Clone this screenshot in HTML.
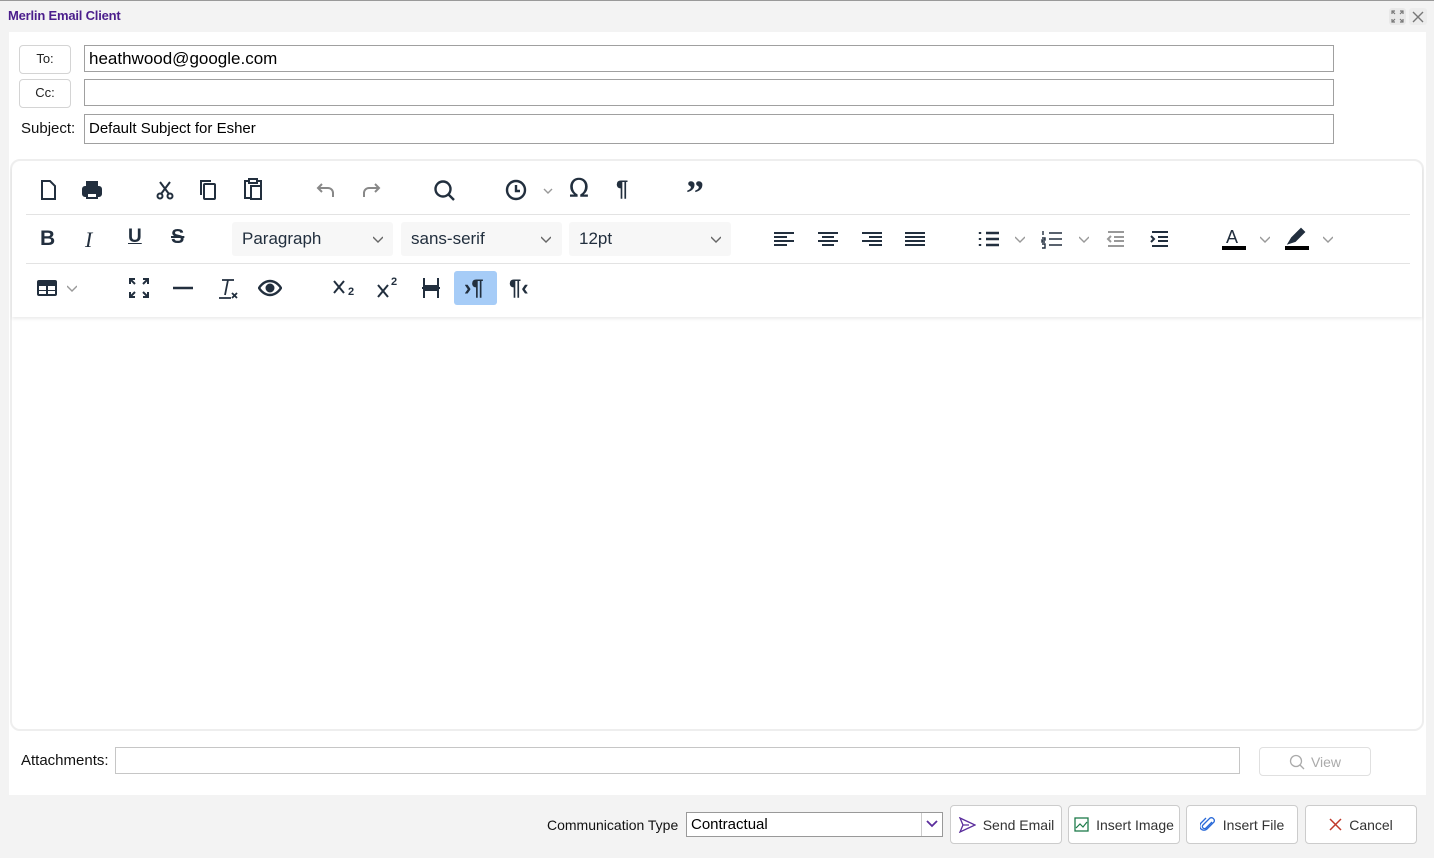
<!DOCTYPE html>
<html><head><meta charset="utf-8"><style>
*{box-sizing:border-box;margin:0;padding:0}
body{width:1434px;height:858px;background:#f3f3f3;font-family:"Liberation Sans",sans-serif;position:relative;overflow:hidden;color:#111}
.a{position:absolute}
.top{left:0;top:0;width:1434px;height:1px;background:#999}
.title{left:8px;top:8px;font-size:13px;font-weight:bold;color:#4b1e8c;letter-spacing:-0.2px}
.panel{left:9px;top:32px;width:1417px;height:763px;background:#fff}
.lbtn{border:1px solid #d4d4d4;border-radius:4px;background:#fff;font-size:13px;text-align:center;line-height:26px;color:#222}
.inp{border:1px solid #a0a0a0;background:#fff;font-size:16px;padding-left:4px;color:#000}
.editor{left:10px;top:159px;width:1414px;height:572px;border:2px solid #eee;border-radius:10px}
.tb{left:12px;top:161px;width:1410px;height:156px;box-shadow:0 2px 3px rgba(0,0,0,.08);border-radius:10px 10px 0 0}
.sep{height:1px;background:#e3e3e3;left:26px;width:1384px}
.ic{position:absolute;width:24px;height:24px}
.ic path,.ic rect,.ic circle{fill:none;stroke:#222f3e;stroke-width:2}
.sel{position:absolute;top:222px;height:34px;background:#f7f7f7;border-radius:3px;font-size:17px;color:#222f3e;padding-left:10px;line-height:34px}
.chev{position:absolute;width:10px;height:10px}
.btn{position:absolute;top:805px;height:39px;border:1px solid #ccc;border-radius:4px;background:#fff;font-size:14px;color:#333;display:flex;align-items:center;justify-content:center;gap:7px}
</style></head><body>
<div class="a top"></div>
<div class="a title">Merlin Email Client</div>
<div class="a" style="left:1389px;top:8px;width:17px;height:17px;background:#e8e8e8;border-radius:3px"></div>
<svg class="a" style="left:1391px;top:10px" width="13" height="13" viewBox="0 0 13 13"><path d="M1 4V1h3M9 1h3v3M12 9v3H9M4 12H1V9M1 1l3 3M12 1L9 4M12 12L9 9M1 12l3-3" stroke="#777" fill="none" stroke-width="1.2"/></svg>
<div class="a" style="left:1409px;top:8px;width:18px;height:17px;background:#ececec;border-radius:3px"></div>
<svg class="a" style="left:1412px;top:11px" width="12" height="12"><path d="M1 1l10 10M11 1L1 11" stroke="#777" stroke-width="1.4"/></svg>
<div class="a panel"></div>

<div class="a lbtn" style="left:19px;top:45px;width:52px;height:29px">To:</div>
<div class="a lbtn" style="left:19px;top:79px;width:52px;height:29px">Cc:</div>
<div class="a" style="left:21px;top:120px;font-size:15px">Subject:</div>
<div class="a inp" style="left:84px;top:45px;width:1250px;height:27px;line-height:25px;font-size:17px">heathwood@google.com</div>
<div class="a inp" style="left:84px;top:79px;width:1250px;height:27px"></div>
<div class="a inp" style="left:84px;top:114px;width:1250px;height:30px;line-height:28px;font-size:15px">Default Subject for Esher</div>

<div class="a editor"></div>
<div class="a tb"></div>
<div class="a sep" style="top:214px"></div>
<div class="a sep" style="top:263px"></div>

<!-- row1 -->
<svg class="ic" style="left:36px;top:178px" viewBox="0 0 24 24"><path d="M6 3h8l5 5v13H6z"/></svg>
<svg class="ic" style="left:80px;top:178px" viewBox="0 0 24 24"><rect x="7" y="4" width="10" height="4" style="fill:#222f3e"/><rect x="3" y="9" width="18" height="9" rx="2" style="fill:#222f3e"/><rect x="7" y="15" width="10" height="5" style="fill:#fff"/></svg>
<svg class="ic" style="left:153px;top:178px" viewBox="0 0 24 24"><circle cx="7" cy="18" r="2.5"/><circle cx="17" cy="18" r="2.5"/><path d="M8 16L17 4M16 16L7 4"/></svg>
<svg class="ic" style="left:196px;top:178px" viewBox="0 0 24 24"><rect x="8" y="6" width="11" height="15" rx="1"/><path d="M5 17V3h10"/></svg>
<svg class="ic" style="left:241px;top:177px" viewBox="0 0 24 24"><path d="M8 4H4v17h6M16 4h4v5"/><rect x="8" y="2" width="8" height="4"/><rect x="10" y="9" width="10" height="13"/></svg>
<svg class="ic" style="left:314px;top:178px" viewBox="0 0 24 24"><path d="M8 6L4 10l4 4M4 10h10a5 5 0 0 1 5 5v4" style="stroke:#888"/></svg>
<svg class="ic" style="left:359px;top:178px" viewBox="0 0 24 24"><path d="M16 6l4 4-4 4M20 10H10a5 5 0 0 0-5 5v4" style="stroke:#888"/></svg>
<svg class="ic" style="left:432px;top:178px" viewBox="0 0 24 24"><circle cx="11" cy="11" r="7.5" style="stroke-width:2.4"/><path d="M16.5 16.5L22 22" style="stroke-width:2.4"/></svg>
<svg class="ic" style="left:504px;top:178px" viewBox="0 0 24 24"><circle cx="12" cy="12" r="9" style="stroke-width:2.4"/><path d="M12 7v6h4" style="stroke-width:2.4"/></svg>
<svg class="chev" style="left:543px;top:186px" viewBox="0 0 10 10"><path d="M1 3l4 4 4-4" stroke="#999" fill="none" stroke-width="1.4"/></svg>
<div class="a" style="left:569px;top:174px;font-size:26px;color:#222f3e;font-family:'DejaVu Sans',sans-serif">Ω</div>
<div class="a" style="left:616px;top:176px;font-size:22px;font-weight:bold;color:#222f3e">¶</div>
<div class="a" style="left:686px;top:172px;font-size:36px;font-weight:bold;color:#222f3e;font-family:'Liberation Serif',serif">”</div>

<!-- row2 -->
<div class="a" style="left:40px;top:227px;font-size:21px;font-weight:bold;color:#222f3e">B</div>
<div class="a" style="left:85px;top:227px;font-size:22px;font-style:italic;color:#222f3e;font-family:'Liberation Serif',serif">I</div>
<div class="a" style="left:128px;top:226px;font-size:19px;color:#222f3e;font-weight:bold;text-decoration:underline">U</div>
<div class="a" style="left:171px;top:226px;font-size:20px;color:#222f3e;text-decoration:line-through;font-weight:bold">S</div>
<div class="sel" style="left:232px;width:161px">Paragraph</div>
<div class="sel" style="left:401px;width:161px">sans-serif</div>
<div class="sel" style="left:569px;width:162px">12pt</div>
<svg class="chev" style="left:373px;top:234px" viewBox="0 0 10 10"><path d="M0 3l5 5 5-5" stroke="#666" fill="none" stroke-width="1.4"/></svg>
<svg class="chev" style="left:541px;top:234px" viewBox="0 0 10 10"><path d="M0 3l5 5 5-5" stroke="#666" fill="none" stroke-width="1.4"/></svg>
<svg class="chev" style="left:711px;top:234px" viewBox="0 0 10 10"><path d="M0 3l5 5 5-5" stroke="#666" fill="none" stroke-width="1.4"/></svg>
<svg class="ic" style="left:772px;top:227px" viewBox="0 0 24 24"><path d="M2 6h20M2 10h13M2 14h20M2 18h13"/></svg>
<svg class="ic" style="left:816px;top:227px" viewBox="0 0 24 24"><path d="M2 6h20M6 10h12M2 14h20M6 18h12"/></svg>
<svg class="ic" style="left:860px;top:227px" viewBox="0 0 24 24"><path d="M2 6h20M9 10h13M2 14h20M9 18h13"/></svg>
<svg class="ic" style="left:903px;top:227px" viewBox="0 0 24 24"><path d="M2 6h20M2 10h20M2 14h20M2 18h20"/></svg>
<svg class="ic" style="left:977px;top:227px" viewBox="0 0 24 24"><path d="M9 6h13M9 12h13M9 18h13M3 5v2M3 11v2M3 17v2" style="stroke-width:2.4"/></svg>
<svg class="chev" style="left:1015px;top:234px" viewBox="0 0 10 10"><path d="M0 3l5 5 5-5" stroke="#999" fill="none" stroke-width="1.4"/></svg>
<svg class="ic" style="left:1040px;top:227px" viewBox="0 0 24 24"><path d="M9 6h13M9 12h13M9 18h13M3 4v4M2 11h3v2H2v2h3M2 17h3v4H2" style="stroke-width:1.4"/></svg>
<svg class="chev" style="left:1079px;top:234px" viewBox="0 0 10 10"><path d="M0 3l5 5 5-5" stroke="#999" fill="none" stroke-width="1.4"/></svg>
<svg class="ic" style="left:1104px;top:227px" viewBox="0 0 24 24"><path d="M4 5h16M10 10h10M10 14h10M4 19h16M7 9l-3 3 3 3" style="stroke:#999"/></svg>
<svg class="ic" style="left:1148px;top:227px" viewBox="0 0 24 24"><path d="M4 5h16M10 10h10M10 14h10M4 19h16M3 9l3 3-3 3"/></svg>
<div class="a" style="left:1226px;top:227px;font-size:18px;color:#222f3e">A</div>
<div class="a" style="left:1222px;top:246px;width:24px;height:4px;background:#000"></div>
<svg class="chev" style="left:1260px;top:234px" viewBox="0 0 10 10"><path d="M0 3l5 5 5-5" stroke="#999" fill="none" stroke-width="1.4"/></svg>
<svg class="ic" style="left:1285px;top:225px" viewBox="0 0 24 24"><path d="M4 18l3-5 9-9 3 3-9 9z" style="fill:#222f3e"/></svg>
<div class="a" style="left:1285px;top:246px;width:24px;height:4px;background:#000"></div>
<svg class="chev" style="left:1323px;top:234px" viewBox="0 0 10 10"><path d="M0 3l5 5 5-5" stroke="#999" fill="none" stroke-width="1.4"/></svg>

<!-- row3 -->
<svg class="ic" style="left:35px;top:276px" viewBox="0 0 24 24"><rect x="2" y="4" width="20" height="16" rx="2" style="fill:#222f3e;stroke:none"/><rect x="4" y="10" width="7" height="4" style="fill:#fff;stroke:none"/><rect x="13" y="10" width="7" height="4" style="fill:#fff;stroke:none"/><rect x="4" y="15" width="7" height="3" style="fill:#fff;stroke:none"/><rect x="13" y="15" width="7" height="3" style="fill:#fff;stroke:none"/></svg>
<svg class="chev" style="left:67px;top:283px" viewBox="0 0 10 10"><path d="M0 3l5 5 5-5" stroke="#999" fill="none" stroke-width="1.4"/></svg>
<svg class="ic" style="left:127px;top:276px" viewBox="0 0 24 24"><path d="M3 8V3h5M16 3h5v5M21 16v5h-5M8 21H3v-5M3 3l5 5M21 3l-5 5M21 21l-5-5M3 21l5-5"/></svg>
<svg class="ic" style="left:171px;top:276px" viewBox="0 0 24 24"><path d="M2 12h20" style="stroke-width:2.4"/></svg>
<svg class="ic" style="left:215px;top:276px" viewBox="0 0 24 24"><path d="M7 4h12M13 4l-3 15M4 22h12M17 17l5 5M22 17l-5 5" style="stroke-width:1.8"/></svg>
<svg class="ic" style="left:258px;top:276px" viewBox="0 0 24 24"><path d="M1 12s4-7 11-7 11 7 11 7-4 7-11 7S1 12 1 12z" style="stroke-width:2.4"/><circle cx="12" cy="12" r="3.5" style="fill:#222f3e"/></svg>
<svg class="ic" style="left:332px;top:276px" viewBox="0 0 24 24"><path d="M2 5l10 12M12 5L2 17"/></svg>
<div class="a" style="left:348px;top:286px;font-size:11px;font-weight:bold;color:#222f3e">2</div>
<svg class="ic" style="left:376px;top:280px" viewBox="0 0 24 24"><path d="M2 5l10 12M12 5L2 17"/></svg>
<div class="a" style="left:391px;top:276px;font-size:11px;font-weight:bold;color:#222f3e">2</div>
<svg class="ic" style="left:419px;top:276px" viewBox="0 0 24 24"><path d="M5 2v8h14V2M5 22v-8h14v8M3 12h18" style="stroke-width:2"/></svg>
<div class="a" style="left:454px;top:271px;width:43px;height:34px;background:#a6ccf7;border-radius:3px"></div>
<div class="a" style="left:464px;top:275px;font-size:22px;font-weight:bold;color:#222f3e">›¶</div>
<div class="a" style="left:509px;top:275px;font-size:22px;font-weight:bold;color:#222f3e">¶‹</div>

<!-- attachments -->
<div class="a" style="left:21px;top:752px;font-size:15px">Attachments:</div>
<div class="a inp" style="left:115px;top:747px;width:1125px;height:27px;border-color:#c6c6c6"></div>
<div class="a" style="left:1259px;top:747px;width:112px;height:29px;border:1px solid #e0e0e0;border-radius:4px;font-size:14px;color:#aaa;display:flex;align-items:center;justify-content:center;gap:6px"><svg width="16" height="16"><circle cx="7" cy="7" r="5.5" stroke="#aaa" fill="none" stroke-width="1.3"/><path d="M11 11l4 4" stroke="#aaa" stroke-width="1.3"/></svg>View</div>

<!-- footer -->
<div class="a" style="left:547px;top:817px;font-size:14px;color:#111">Communication Type</div>
<div class="a inp" style="left:686px;top:812px;width:257px;height:25px;font-size:15px;line-height:23px;border-color:#999">Contractual</div>
<div class="a" style="left:921px;top:813px;width:21px;height:23px;border-left:1px solid #ccc;background:#fff"></div>
<svg class="a" style="left:925px;top:819px" width="14" height="10"><path d="M2 2l5 5 5-5" stroke="#5a2d9c" fill="none" stroke-width="1.8"/></svg>
<div class="btn" style="left:950px;width:112px"><svg width="18" height="16"><path d="M2 1l15 7-15 7 3-7z M5 8h6" stroke="#5a2d9c" fill="none" stroke-width="1.3"/></svg>Send Email</div>
<div class="btn" style="left:1068px;width:112px"><svg width="15" height="15"><rect x="1" y="1" width="13" height="13" stroke="#1e7b4a" fill="none" stroke-width="1.3"/><path d="M2 11l4-4 3 3 4-5" stroke="#1e7b4a" fill="none" stroke-width="1.2"/></svg>Insert Image</div>
<div class="btn" style="left:1186px;width:112px"><svg width="16" height="17"><path d="M12 6l-6 6a2 2 0 0 1-3-3l7-7a3 3 0 0 1 4 4l-7 7a4 4 0 0 1-6-6l5-5" stroke="#2a6ad8" fill="none" stroke-width="1.3"/></svg>Insert File</div>
<div class="btn" style="left:1305px;width:112px"><svg width="13" height="13"><path d="M1 1l11 11M12 1L1 12" stroke="#c0392b" stroke-width="1.5"/></svg>Cancel</div>
</body></html>
